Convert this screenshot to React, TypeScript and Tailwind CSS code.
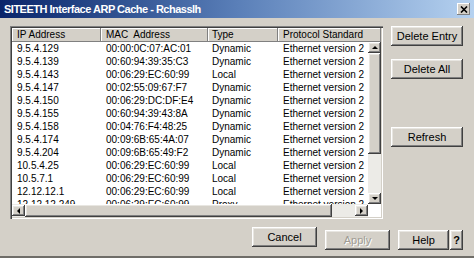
const rows: [string, string, string][] = [
  ["9.5.4.129", "00:00:0C:07:AC:01", "Dynamic"],
  ["9.5.4.139", "00:60:94:39:35:C3", "Dynamic"],
  ["9.5.4.143", "00:06:29:EC:60:99", "Local"],
  ["9.5.4.147", "00:02:55:09:67:F7", "Dynamic"],
  ["9.5.4.150", "00:06:29:DC:DF:E4", "Dynamic"],
  ["9.5.4.155", "00:60:94:39:43:8A", "Dynamic"],
  ["9.5.4.158", "00:04:76:F4:48:25", "Dynamic"],
  ["9.5.4.174", "00:09:6B:65:4A:07", "Dynamic"],
  ["9.5.4.204", "00:09:6B:65:49:F2", "Dynamic"],
  ["10.5.4.25", "00:06:29:EC:60:99", "Local"],
  ["10.5.7.1", "00:06:29:EC:60:99", "Local"],
  ["12.12.12.1", "00:06:29:EC:60:99", "Local"],
  ["12.12.12.249", "00:06:29:EC:60:99", "Proxy"],
];

const raised =
  "bg-[#d4d0c8] shadow-[inset_-1px_-1px_#404040,inset_1px_1px_#ffffff,inset_-2px_-2px_#808080,inset_2px_2px_#e8e6e1]";
const thin = "bg-[#d4d0c8] shadow-[inset_-1px_-1px_#808080,inset_1px_1px_#ffffff]";

function Arrow({ dir }: { dir: "up" | "down" | "left" | "right" }) {
  const pts = {
    up: "1,5 4,2 7,5",
    down: "1,2 4,5 7,2",
    left: "5,1 2,4 5,7",
    right: "2,1 5,4 2,7",
  }[dir];
  return (
    <div className={`${raised} w-[13px] h-[11px] flex items-center justify-center shrink-0`}>
      <svg width="8" height="8" viewBox="0 0 8 8">
        <polygon points={pts} fill="#000" />
      </svg>
    </div>
  );
}

function Btn({ label, w, disabled }: { label: string; w: string; disabled?: boolean }) {
  return (
    <button
      className={`${raised} ${w} h-[20px] text-[11px] leading-[20px] ${
        disabled ? "text-[#a09c94] [text-shadow:1px_1px_#ffffff]" : "text-black"
      }`}
    >
      {label}
    </button>
  );
}

export default function App() {
  return (
    <div className="w-[474px] h-[258px] bg-[#d4d0c8] font-['Liberation_Sans',Arial,sans-serif] text-black flex flex-col overflow-hidden border-b-2 border-[#6f6d68]">
      {/* title bar */}
      <div className="h-[18px] flex items-center justify-between pl-[4px] pr-[4px] bg-gradient-to-r from-[#0a246a] via-[#5a7fb8] to-[#b6d2f0]">
        <span className="text-white font-bold text-[11px] tracking-[-0.5px] leading-[18px]">
          SITEETH Interface ARP Cache - Rchasslh
        </span>
        <div className={`${thin} w-[13px] h-[12px] flex items-center justify-center`}>
          <svg width="8" height="7" viewBox="0 0 8 7">
            <path d="M1 0.5 L7 6.5 M7 0.5 L1 6.5" stroke="#000" strokeWidth="1.6" />
          </svg>
        </div>
      </div>

      <div className="flex pl-[10px] pt-[8px] gap-[8px]">
        {/* table panel */}
        <div className="w-[373px] h-[193px] p-[2px] bg-white shadow-[inset_1px_1px_#808080,inset_2px_2px_#404040,inset_-1px_-1px_#ffffff,inset_-2px_-2px_#d4d0c8] flex flex-col text-[10px]">
          <div className="flex h-[14px] leading-[14px] shrink-0">
            <div className={`${thin} w-[89px] pl-[5px]`}>IP Address</div>
            <div className={`${thin} w-[107px] pl-[5px] whitespace-pre`}>MAC  Address</div>
            <div className={`${thin} w-[70px] pl-[4px]`}>Type</div>
            <div className={`${thin} flex-1 pl-[5px]`}>Protocol Standard</div>
          </div>
          <div className="flex h-[162px]">
            <div className="w-[356px] overflow-hidden">
              {rows.map(([ip, mac, type]) => (
                <div key={ip} className="flex h-[13px] leading-[13px] whitespace-nowrap">
                  <div className="w-[89px] pl-[5px]">{ip}</div>
                  <div className="w-[107px] pl-[5px]">{mac}</div>
                  <div className="w-[70px] pl-[4px]">{type}</div>
                  <div className="flex-1 pl-[5px]">Ethernet version 2</div>
                </div>
              ))}
            </div>
            <div className="w-[13px] flex flex-col bg-[#ecebe7]">
              <Arrow dir="up" />
              <div className={`${raised} h-[101px]`} />
              <div className="flex-1" />
              <Arrow dir="down" />
            </div>
          </div>
          <div className="flex h-[13px]">
            <div className="w-[356px] flex items-center bg-[#ecebe7]">
              <Arrow dir="left" />
              <div className={`${raised} w-[307px] h-[13px]`} />
              <div className="flex-1" />
              <Arrow dir="right" />
            </div>
            <div className="flex-1 bg-white" />
          </div>
        </div>

        {/* side buttons */}
        <div className="flex flex-col">
          <Btn label="Delete Entry" w="w-[72px]" />
          <div className="mt-[10px]">
            <Btn label="Delete All" w="w-[72px]" />
          </div>
          <div className="mt-[44px]">
            <Btn label="Refresh" w="w-[72px]" />
          </div>
        </div>
      </div>

      <div className="flex justify-end pr-[11px] pt-[8px]">
        <Btn label="Cancel" w="w-[65px]" />
        <div className="ml-[8px]">
          <Btn label="Apply" w="w-[65px]" disabled />
        </div>
        <div className="ml-[8px]">
          <Btn label="Help" w="w-[51px]" />
        </div>
        <div className="ml-[1px]">
          <button className={`${raised} w-[13px] h-[20px] text-[11px] font-bold leading-[20px]`}>?</button>
        </div>
      </div>
    </div>
  );
}
